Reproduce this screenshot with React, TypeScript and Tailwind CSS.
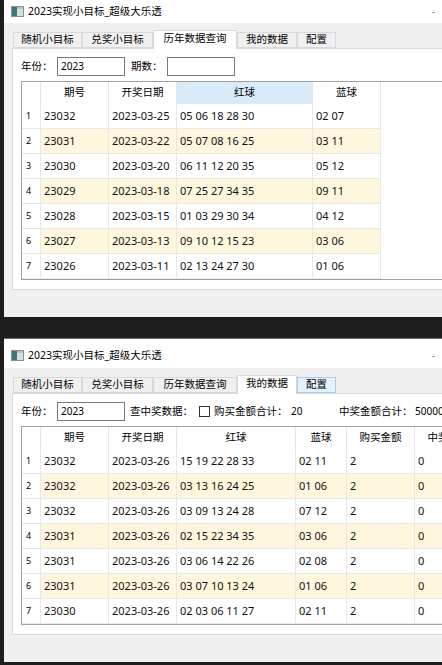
import React from "react";

type Col = { title: string; w: number; hl?: boolean };

const topCols: Col[] = [
  { title: "期号", w: 68 },
  { title: "开奖日期", w: 68 },
  { title: "红球", w: 136, hl: true },
  { title: "蓝球", w: 68 },
];

const bottomCols: Col[] = [
  { title: "期号", w: 68 },
  { title: "开奖日期", w: 68 },
  { title: "红球", w: 119 },
  { title: "蓝球", w: 51 },
  { title: "购买金额", w: 68 },
  { title: "中奖金额", w: 68 },
];

const topRows = [
  ["23032", "2023-03-25", "05 06 18 28 30", "02 07"],
  ["23031", "2023-03-22", "05 07 08 16 25", "03 11"],
  ["23030", "2023-03-20", "06 11 12 20 35", "05 12"],
  ["23029", "2023-03-18", "07 25 27 34 35", "09 11"],
  ["23028", "2023-03-15", "01 03 29 30 34", "04 12"],
  ["23027", "2023-03-13", "09 10 12 15 23", "03 06"],
  ["23026", "2023-03-11", "02 13 24 27 30", "01 06"],
];

const bottomRows = [
  ["23032", "2023-03-26", "15 19 22 28 33", "02 11", "2", "0"],
  ["23032", "2023-03-26", "03 13 16 24 25", "01 06", "2", "0"],
  ["23032", "2023-03-26", "03 09 13 24 28", "07 12", "2", "0"],
  ["23031", "2023-03-26", "02 15 22 34 35", "03 06", "2", "0"],
  ["23031", "2023-03-26", "03 06 14 22 26", "02 08", "2", "0"],
  ["23031", "2023-03-26", "03 07 10 13 24", "01 06", "2", "0"],
  ["23030", "2023-03-26", "02 03 06 11 27", "02 11", "2", "0"],
];

const tabs = [
  { label: "随机小目标", w: 69 },
  { label: "兑奖小目标", w: 71 },
  { label: "历年数据查询", w: 84 },
  { label: "我的数据", w: 60 },
  { label: "配置", w: 39 },
];

function AppIcon() {
  return (
    <svg width="13" height="11" viewBox="0 0 13 11" className="shrink-0">
      <rect x="0.5" y="0.5" width="12" height="10" fill="#d8dcdc" stroke="#8a8f90" />
      <rect x="1" y="1" width="5" height="9" fill="#3c7a78" />
      <rect x="6" y="1" width="6" height="2" fill="#b7c0c0" />
    </svg>
  );
}

function TabBar({ selected, hover }: { selected: number; hover?: number }) {
  return (
    <div className="flex h-[18px] items-end ml-[1px] relative z-10">
      {tabs.map((t, i) => {
        const sel = i === selected;
        const hov = i === hover;
        return (
          <div
            key={t.label}
            style={{ width: t.w }}
            className={
              sel
                ? "h-[19px] -mb-px bg-white border border-b-0 border-[#d9d9d9] flex items-center justify-center pb-[2px] text-[10.5px] text-black"
                : hov
                  ? "h-[16px] bg-[#e5f1fb] border border-[#a6cdef] flex items-center justify-center text-[10.5px] text-black"
                  : "h-[16px] bg-[#f0f0f0] border border-[#d9d9d9] flex items-center justify-center text-[10.5px] text-black"
            }
          >
            {t.label}
          </div>
        );
      })}
    </div>
  );
}

function DataTable({
  cols,
  rows,
  fillRest,
}: {
  cols: Col[];
  rows: string[][];
  fillRest: boolean;
}) {
  return (
    <div className="mt-[5px] w-[480px] border border-[#a0a0a0] bg-white">
      <div className="flex h-[22px]">
        <div className="w-[19px] shrink-0 border-r border-[#e5e5e5]" />
        {cols.map((c) => (
          <div
            key={c.title}
            style={{ width: c.w }}
            className={
              "shrink-0 border-r border-[#e5e5e5] flex items-center justify-center text-[10.5px] text-black whitespace-nowrap " +
              (c.hl ? "bg-[#d9ebf9]" : "")
            }
          >
            {c.title}
          </div>
        ))}
      </div>
      {rows.map((r, i) => (
        <div key={i} className="flex h-[25px]">
          <div className="w-[19px] shrink-0 border-r border-b border-[#e8e8e8] flex items-center pl-[4px] text-[9px] text-black">
            {i + 1}
          </div>
          {cols.map((c, j) => (
            <div
              key={c.title}
              style={{ width: c.w }}
              className={
                "shrink-0 border-r border-b border-[#e8e8e8] flex items-center pl-[3px] text-[11px] text-[#111] whitespace-nowrap " +
                (i % 2 === 1 ? "bg-[#fef7de]" : "bg-white")
              }
            >
              {r[j]}
            </div>
          ))}
          {fillRest ? null : <div className="flex-1" />}
        </div>
      ))}
    </div>
  );
}

function Input({ value }: { value?: string }) {
  return (
    <div className="w-[68px] h-[19px] bg-white border border-[#7a7a7a] flex items-center pl-[3px] text-[10px] text-black">
      {value}
    </div>
  );
}

function Window({ top }: { top: boolean }) {
  return (
    <div
      className={
        "ml-[4px] w-[520px] bg-[#f0f0f0] flex flex-col " +
        (top ? "h-[317px]" : "h-[324px] border-t border-[#6a6a6a]")
      }
    >
      <div
        className={
          "bg-white flex items-center pl-[7px] gap-[4px] " +
          (top ? "h-[23px]" : "h-[29px] pt-[4px]")
        }
      >
        <AppIcon />
        <span className="text-[10.5px] text-black whitespace-nowrap w-[400px]">
          2023实现小目标_超级大乐透
        </span>
        <span className="text-[9px] text-[#555]">-</span>
      </div>
      <div className="pl-[8px] pt-[7px] flex flex-col">
        <TabBar selected={top ? 2 : 3} hover={top ? undefined : 4} />
        <div className="h-[242px] bg-white border border-[#d9d9d9] pl-[8px] pt-[8px]">
          {top ? (
            <div className="flex items-center h-[19px] text-[10.5px] text-black">
              <span className="w-[36px]">年份：</span>
              <Input value="2023" />
              <span className="ml-[6px] w-[36px]">期数：</span>
              <Input />
            </div>
          ) : (
            <div className="flex items-center h-[19px] text-[10.5px] text-black whitespace-nowrap">
              <span className="w-[36px]">年份：</span>
              <Input value="2023" />
              <span className="ml-[5px] w-[69px]">查中奖数据：</span>
              <span className="w-[11px] h-[11px] border border-[#333] bg-white shrink-0" />
              <span className="ml-[4px] w-[77px]">购买金额合计：</span>
              <span className="w-[48px] text-[10px]">20</span>
              <span className="w-[76px]">中奖金额合计：</span>
              <span className="text-[10px]">500000</span>
            </div>
          )}
          <DataTable
            cols={top ? topCols : bottomCols}
            rows={top ? topRows : bottomRows}
            fillRest={!top}
          />
        </div>
      </div>
    </div>
  );
}

export default function App() {
  return (
    <div className="w-[442px] h-[665px] overflow-hidden bg-[#1e1e1e] font-['Noto_Sans','Noto_Sans_CJK_SC',sans-serif]">
      <Window top />
      <div className="h-[21px]" />
      <Window top={false} />
    </div>
  );
}
